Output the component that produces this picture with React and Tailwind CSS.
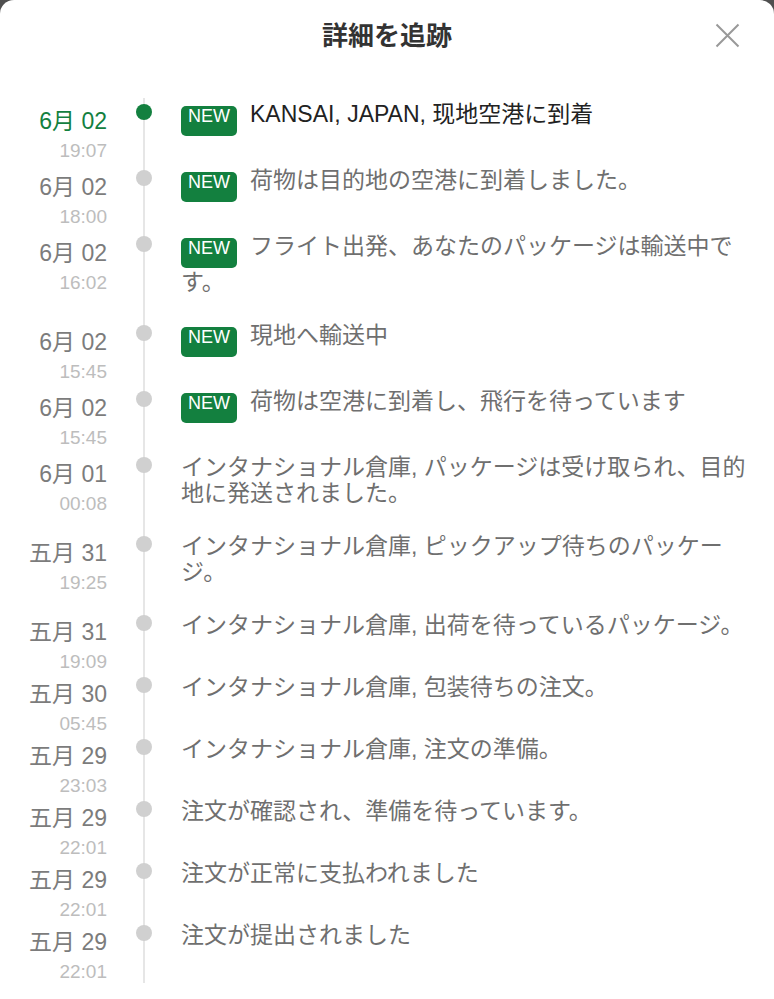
import React from 'react'

const EVENTS = [
  {d:'6月 02', t:'19:07', text:'KANSAI, JAPAN, 现地空港に到着', isNew:true, active:true},
  {d:'6月 02', t:'18:00', text:'荷物は目的地の空港に到着しました。', isNew:true},
  {d:'6月 02', t:'16:02', text:'フライト出発、あなたのパッケージは輸送中です。', isNew:true},
  {d:'6月 02', t:'15:45', text:'現地へ輸送中', isNew:true},
  {d:'6月 02', t:'15:45', text:'荷物は空港に到着し、飛行を待っています', isNew:true},
  {d:'6月 01', t:'00:08', text:'インタナショナル倉庫, パッケージは受け取られ、目的地に発送されました。'},
  {d:'五月 31', t:'19:25', text:'インタナショナル倉庫, ピックアップ待ちのパッケージ。'},
  {d:'五月 31', t:'19:09', text:'インタナショナル倉庫, 出荷を待っているパッケージ。'},
  {d:'五月 30', t:'05:45', text:'インタナショナル倉庫, 包装待ちの注文。'},
  {d:'五月 29', t:'23:03', text:'インタナショナル倉庫, 注文の準備。'},
  {d:'五月 29', t:'22:01', text:'注文が確認され、準備を待っています。'},
  {d:'五月 29', t:'22:01', text:'注文が正常に支払われました'},
  {d:'五月 29', t:'22:01', text:'注文が提出されました'},
]

function Row({e}) {
  return (
    <div className={'flex items-start '+(e.isNew?'min-h-[66px]':'')}>
      <div className="w-[107px] shrink-0 pt-[2px] text-right">
        <p className={'text-[23px] leading-[30px] whitespace-nowrap '+(e.active?'text-[#13803f]':'text-[#7c7c7c]')}>{e.d}</p>
        <p className="text-[19px] leading-[30px] text-[#bdbdbd]">{e.t}</p>
      </div>
      <div className="w-[74px] shrink-0 flex justify-center">
        <span className={'relative z-10 block w-4 h-4 rounded-full '+(e.active?'bg-[#13803f]':'bg-[#d0d0d0]')}></span>
      </div>
      <div className={'flex-1 mt-[-3px] pb-[30px] pr-[18px] text-[23px] leading-[26px] '+(e.active?'text-[#222]':'text-[#6f6f6f]')}>
        {e.isNew && (
          <span className="inline-block h-[30px] mb-[1px] mr-[13px] px-[7px] rounded-[5px] bg-[#13803f] text-white text-[18px] leading-[20px] align-baseline">NEW</span>
        )}
        {e.text}
      </div>
    </div>
  )
}

export default function App() {
  return (
    <div className="h-[999px] bg-[#4f4f4f] font-['Liberation_Sans','Noto_Sans_CJK_JP',sans-serif]">
      <div className="h-full bg-white rounded-t-[14px] overflow-hidden">
        <div className="relative h-[72px] flex items-center justify-center">
          <h1 className="text-[26px] font-bold text-[#333]">詳細を追跡</h1>
          <button className="absolute right-[34px] top-[23px] w-[25px] h-[25px]">
            <svg viewBox="0 0 25 25" width="25" height="25" stroke="#999" strokeWidth="2" fill="none">
              <path d="M1.5 1.5 L23.5 23.5 M23.5 1.5 L1.5 23.5" />
            </svg>
          </button>
        </div>

        <div className="relative mt-[26px] pt-[6px]">
          <div className="absolute left-[143px] top-0 bottom-[4px] w-[2px] bg-[#e6e6e6]"></div>
          {EVENTS.map((e,i)=>(
            <Row key={i} e={e}/>
          ))}
        </div>
      </div>
    </div>
  )
}
